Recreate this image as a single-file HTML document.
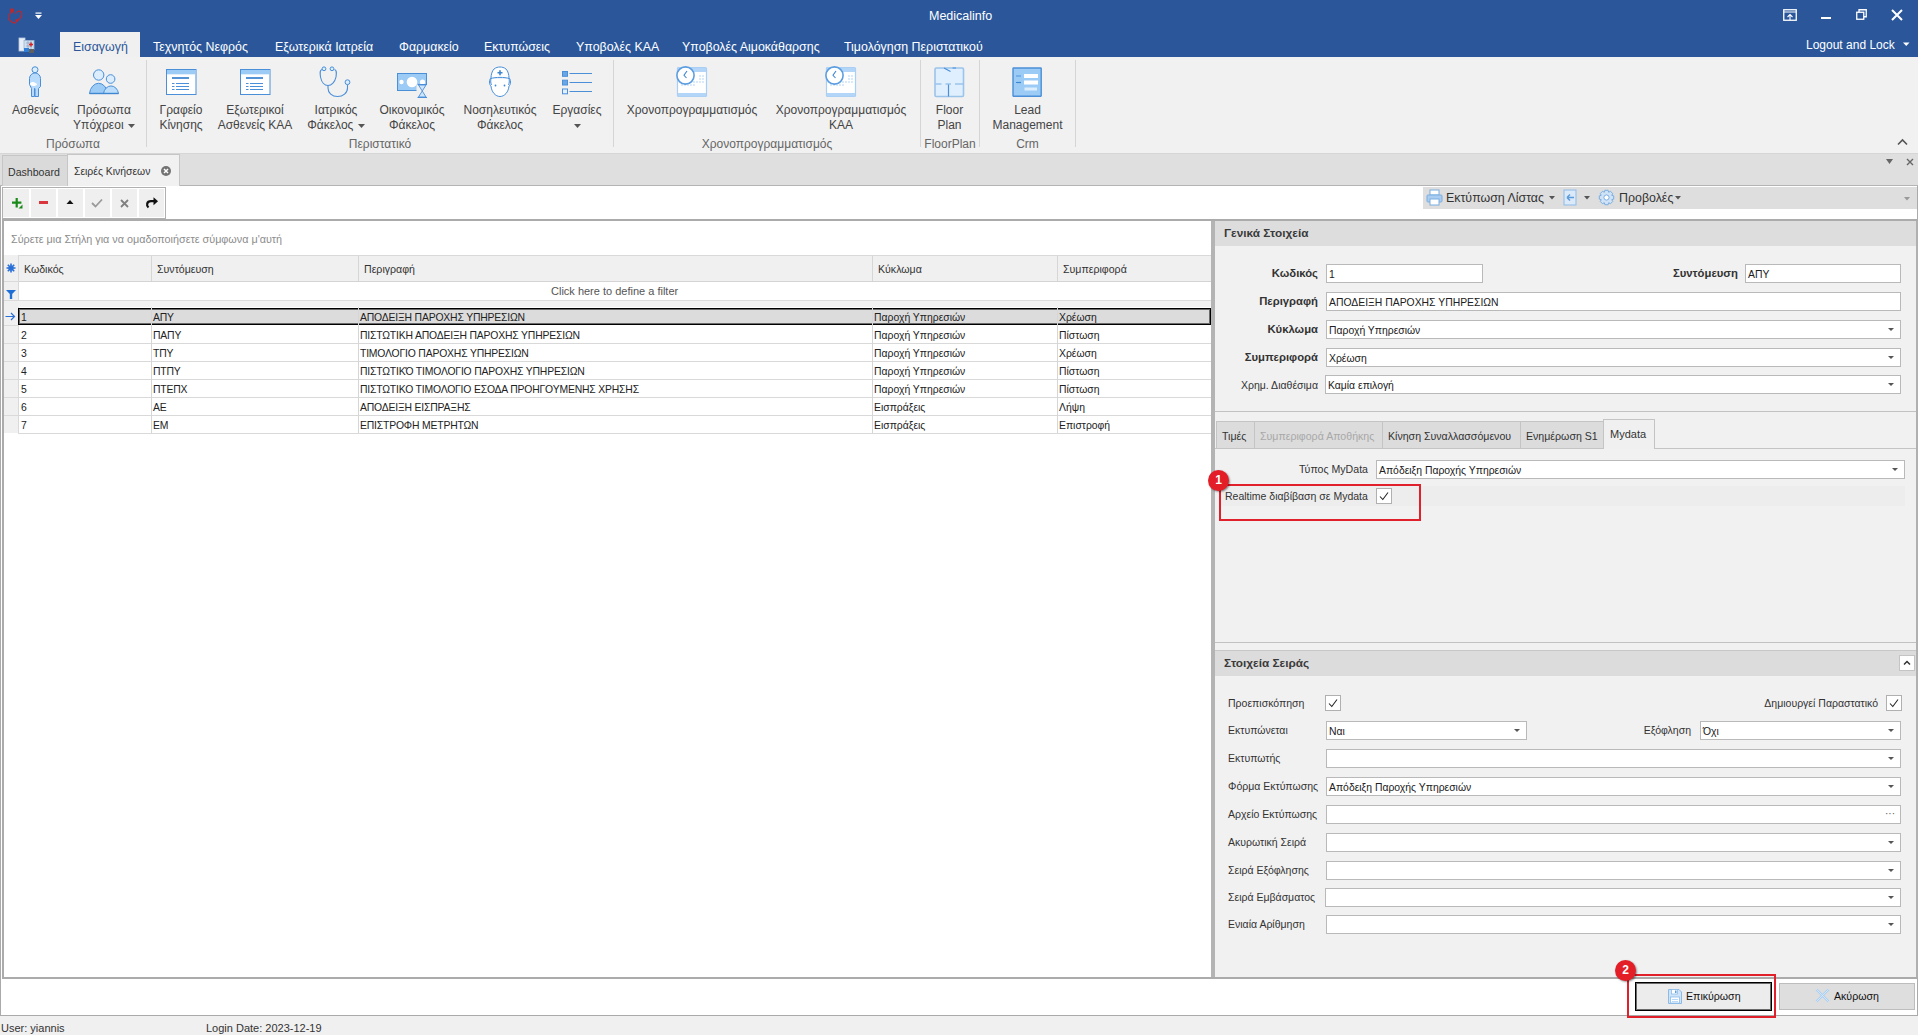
<!DOCTYPE html>
<html><head><meta charset="utf-8">
<style>
*{box-sizing:border-box;margin:0;padding:0}
html,body{width:1918px;height:1035px;overflow:hidden;background:#f0f0f0;font-family:"Liberation Sans",sans-serif;font-size:11px;color:#1e1e1e}
.a{position:absolute}
.t{position:absolute;white-space:nowrap;line-height:1}
.w{color:#fff}
.rb{font-size:12px;color:#444;text-align:center;line-height:15px;white-space:nowrap}
.gl{font-size:12px;color:#666;text-align:center;white-space:nowrap}
.sep{position:absolute;width:1px;background:#d5d5d5;top:60px;height:87px}
.inp{position:absolute;background:#fff;border:1px solid #b9b9b9;height:19px}
.inp span{position:absolute;left:2px;top:3px;white-space:nowrap;font-size:11px;color:#202020}
.dd{position:absolute;right:6px;top:7px;width:0;height:0;border-left:3.5px solid transparent;border-right:3.5px solid transparent;border-top:3.5px solid #555}
.lbl{position:absolute;white-space:nowrap;font-size:11px;color:#303030}
.blbl{position:absolute;white-space:nowrap;font-size:11px;font-weight:bold;color:#303030;text-align:right}
.chk{position:absolute;width:16px;height:16px;background:#fff;border:1px solid #b0b0b0}
.row{position:absolute;left:18px;width:1192px;height:18px;border-bottom:1px solid #dcdcdc}
.cell{position:absolute;top:4px;white-space:nowrap;font-size:11px;color:#202020}
</style></head>
<body>
<!-- title bar + menu -->
<div class="a" style="left:0;top:0;width:1918px;height:57px;background:#2b579a"></div>
<div class="t w" style="left:929px;top:10px;font-size:12.5px">Medicalinfo</div>

<!-- active ribbon tab -->
<div class="a" style="left:60px;top:32px;width:80px;height:26px;background:#f0f0f0"></div>
<div class="t" style="left:73px;top:41px;font-size:12.4px;color:#2b579a">Εισαγωγή</div>
<div class="t w" style="left:153px;top:41px;font-size:12.4px">Τεχνητός Νεφρός</div>
<div class="t w" style="left:275px;top:41px;font-size:12.4px">Εξωτερικά Ιατρεία</div>
<div class="t w" style="left:399px;top:41px;font-size:12.4px">Φαρμακείο</div>
<div class="t w" style="left:484px;top:41px;font-size:12.4px">Εκτυπώσεις</div>
<div class="t w" style="left:576px;top:41px;font-size:12.4px">Υποβολές ΚΑΑ</div>
<div class="t w" style="left:682px;top:41px;font-size:12.4px">Υποβολές Αιμοκάθαρσης</div>
<div class="t w" style="left:844px;top:41px;font-size:12.4px">Τιμολόγηση Περιστατικού</div>
<div class="t w" style="left:1806px;top:39px;font-size:12px">Logout and Lock</div>

<!-- ribbon -->
<div class="a" style="left:0;top:57px;width:1918px;height:97px;background:#f1f1f1;border-bottom:1px solid #d6d6d6"></div>

<!-- doc tab strip -->
<div class="a" style="left:0;top:154px;width:1918px;height:32px;background:#dfdfdf;border-bottom:1px solid #b4b4b4"></div>

<!-- content area -->
<div class="a" style="left:0;top:186px;width:1918px;height:830px;background:#fff;border-left:1px solid #aaa;border-bottom:1px solid #aaa;border-right:1px solid #aaa"></div>

<!-- status bar -->
<div class="t" style="left:1px;top:1023px;font-size:11px;color:#333">User: yiannis</div>
<div class="t" style="left:206px;top:1023px;font-size:11px;color:#333">Login Date: 2023-12-19</div>
<!-- doc tabs -->
<div class="a" style="left:2px;top:155px;width:66px;height:31px;background:#dadada;border:1px solid #c6c6c6;border-bottom:none"></div>
<div class="t" style="left:8px;top:167px;font-size:10.6px;color:#333">Dashboard</div>
<div class="a" style="left:67px;top:154px;width:113px;height:32px;background:#f1f1f1;border:1px solid #c6c6c6;border-bottom:none"></div>
<div class="t" style="left:74px;top:167px;font-size:10.4px;color:#333">Σειρές Κινήσεων</div>
<div class="a" style="left:161px;top:166px;width:10px;height:10px;border-radius:50%;background:#737373"></div>
<svg class="a" style="left:161px;top:166px" width="10" height="10"><path d="M3 3L7 7M7 3L3 7" stroke="#fff" stroke-width="1.5"/></svg>
<svg class="a" style="left:1886px;top:159px" width="8" height="6"><path d="M0 0H7L3.5 5Z" fill="#666"/></svg>
<svg class="a" style="left:1906px;top:158px" width="8" height="8"><path d="M1 1L7 7M7 1L1 7" stroke="#666" stroke-width="1.4"/></svg>

<!-- toolbar -->
<div class="a" style="left:2px;top:187px;width:164px;height:32px;background:#fff;border:1px solid #b0b0b0"></div>
<div class="a" style="left:3px;top:189px;width:26px;height:28px;background:#efefef"></div>
<div class="a" style="left:31px;top:189px;width:25px;height:28px;background:#efefef"></div>
<div class="a" style="left:58px;top:189px;width:25px;height:28px;background:#efefef"></div>
<div class="a" style="left:85px;top:189px;width:25px;height:28px;background:#efefef"></div>
<div class="a" style="left:112px;top:189px;width:25px;height:28px;background:#efefef"></div>
<div class="a" style="left:139px;top:189px;width:25px;height:28px;background:#efefef"></div>
<svg class="a" style="left:12px;top:198px" width="11" height="11"><path d="M3.6 0h2.2v3.6H9.4v2.2H5.8V9.4H3.6V5.8H0V3.6h3.6z" fill="#1a8a1a"/><path d="M10.5 6.5V10.5H6.5z" fill="#1a8a1a"/></svg>
<div class="a" style="left:39px;top:201px;width:9px;height:3px;background:#d9363e"></div>
<svg class="a" style="left:66px;top:199px" width="9" height="6"><path d="M0.5 5H7.5L4 1Z" fill="#111"/></svg>
<svg class="a" style="left:91px;top:198px" width="12" height="10"><path d="M1 5L4.5 8.5L11 1.5" stroke="#9a9a9a" stroke-width="1.8" fill="none"/></svg>
<svg class="a" style="left:120px;top:199px" width="9" height="9"><path d="M1 1L8 8M8 1L1 8" stroke="#808080" stroke-width="1.8"/></svg>
<svg class="a" style="left:145px;top:196px" width="14" height="13"><path d="M3.5 11.5C1.2 9.5 1.5 5.2 6 5.2H9" stroke="#111" stroke-width="2.2" fill="none"/><path d="M8.5 1.2L13 5.2L8.5 9.2Z" fill="#111"/></svg>

<!-- right toolbar -->
<div class="a" style="left:1423px;top:187px;width:494px;height:22px;background:#dedede"></div>
<svg class="a" style="left:1426px;top:189px" width="17" height="17"><rect x="4" y="1" width="9" height="5" fill="#fff" stroke="#7aaee0"/><rect x="1" y="6" width="15" height="7" rx="1" fill="#a9cdf0" stroke="#7aaee0"/><rect x="4" y="10" width="9" height="6" fill="#fff" stroke="#7aaee0"/></svg>
<div class="t" style="left:1446px;top:192px;font-size:12.4px;color:#333">Εκτύπωση Λίστας</div>
<svg class="a" style="left:1549px;top:196px" width="7" height="4"><path d="M0 0H6L3 3.5Z" fill="#555"/></svg>
<svg class="a" style="left:1563px;top:189px" width="15" height="17"><rect x="1" y="1" width="12" height="15" fill="#dbe9f8" stroke="#8dbbe8"/><path d="M4 8.5H11M4 8.5L7 5.5M4 8.5L7 11.5" stroke="#5d9ddc" stroke-width="1.5" fill="none"/></svg>
<svg class="a" style="left:1584px;top:196px" width="7" height="4"><path d="M0 0H6L3 3.5Z" fill="#555"/></svg>
<svg class="a" style="left:1598px;top:189px" width="17" height="17"><path d="M15.72 6.89 L15.72 10.11 L13.77 10.67 L13.76 10.70 L14.75 12.46 L12.46 14.75 L10.70 13.76 L10.67 13.77 L10.11 15.72 L6.89 15.72 L6.33 13.77 L6.30 13.76 L4.54 14.75 L2.25 12.46 L3.24 10.70 L3.23 10.67 L1.28 10.11 L1.28 6.89 L3.23 6.33 L3.24 6.30 L2.25 4.54 L4.54 2.25 L6.30 3.24 L6.33 3.23 L6.89 1.28 L10.11 1.28 L10.67 3.23 L10.70 3.24 L12.46 2.25 L14.75 4.54 L13.76 6.30 L13.77 6.33Z" fill="#cfe2f6" stroke="#7aaee0" stroke-width="1"/><circle cx="8.5" cy="8.5" r="2.6" fill="#fff" stroke="#7aaee0"/></svg>
<div class="t" style="left:1619px;top:192px;font-size:12.4px;color:#333">Προβολές</div>
<svg class="a" style="left:1675px;top:196px" width="7" height="4"><path d="M0 0H6L3 3.5Z" fill="#555"/></svg>
<svg class="a" style="left:1904px;top:197px" width="7" height="4"><path d="M0 0H6L3 3.5Z" fill="#999"/></svg>
<!-- grid -->
<div class="a" style="left:2px;top:219px;width:1210px;height:760px;border:2px solid #ababab;border-right:none;background:#fff"></div>
<div class="t" style="left:11px;top:234px;font-size:10.8px;color:#8c8c8c">Σύρετε μια Στήλη για να ομαδοποιήσετε σύμφωνα μ'αυτή</div>
<div class="a" style="left:4px;top:255px;width:1207px;height:27px;background:#f0f0f0;border-top:1px solid #d9d9d9;border-bottom:1px solid #d4d4d4"></div>
<div class="a" style="left:4px;top:255px;width:15px;height:178px;background:#f0f0f0;border-right:1px solid #d9d9d9"></div>
<div class="a" style="left:4px;top:281px;width:14px;height:1px;background:#dadada"></div>
<div class="a" style="left:4px;top:300px;width:14px;height:1px;background:#dadada"></div>
<div class="a" style="left:4px;top:325px;width:14px;height:1px;background:#dadada"></div>
<div class="a" style="left:4px;top:343px;width:14px;height:1px;background:#dadada"></div>
<div class="a" style="left:4px;top:361px;width:14px;height:1px;background:#dadada"></div>
<div class="a" style="left:4px;top:379px;width:14px;height:1px;background:#dadada"></div>
<div class="a" style="left:4px;top:397px;width:14px;height:1px;background:#dadada"></div>
<div class="a" style="left:4px;top:415px;width:14px;height:1px;background:#dadada"></div>
<div class="a" style="left:151px;top:256px;width:1px;height:25px;background:#d6d6d6"></div>
<div class="a" style="left:358px;top:256px;width:1px;height:25px;background:#d6d6d6"></div>
<div class="a" style="left:872px;top:256px;width:1px;height:25px;background:#d6d6d6"></div>
<div class="a" style="left:1057px;top:256px;width:1px;height:25px;background:#d6d6d6"></div>
<div class="t" style="left:24px;top:264px;font-size:10.6px;color:#333">Κωδικός</div>
<div class="t" style="left:157px;top:264px;font-size:10.6px;color:#333">Συντόμευση</div>
<div class="t" style="left:364px;top:264px;font-size:10.6px;color:#333">Περιγραφή</div>
<div class="t" style="left:878px;top:264px;font-size:10.6px;color:#333">Κύκλωμα</div>
<div class="t" style="left:1063px;top:264px;font-size:10.6px;color:#333">Συμπεριφορά</div>
<svg class="a" style="left:6px;top:263px" width="10" height="10"><path d="M5 0.5V9.5M0.5 5H9.5M1.8 1.8L8.2 8.2M8.2 1.8L1.8 8.2" stroke="#2a6fd6" stroke-width="1.6"/><circle cx="5" cy="5" r="2.6" fill="#2a6fd6"/></svg>
<svg class="a" style="left:6px;top:290px" width="10" height="9"><path d="M0 0H10L6.2 4V9H3.8V4Z" fill="#1f6fd6"/></svg>
<svg class="a" style="left:5px;top:312px" width="11" height="9"><path d="M0.5 4.5H9.5M6 1L9.5 4.5L6 8" stroke="#2a6fd6" stroke-width="1.2" fill="none"/></svg>
<div class="t" style="left:551px;top:286px;font-size:11px;color:#555">Click here to define a filter</div>
<div class="a" style="left:18px;top:300px;width:1193px;height:7px;background:#f2f2f2;border-top:1px solid #dcdcdc"></div>
<div class="a" style="left:18px;top:308px;width:1193px;height:17px;background:#dcdcdc;border:1px solid #000;box-shadow:inset 0 0 0 1px #6a6a6a"></div>
<div class="a" style="left:151px;top:307px;width:1px;height:18px;background:#d6d6d6"></div>
<div class="a" style="left:358px;top:307px;width:1px;height:18px;background:#d6d6d6"></div>
<div class="a" style="left:872px;top:307px;width:1px;height:18px;background:#d6d6d6"></div>
<div class="a" style="left:1057px;top:307px;width:1px;height:18px;background:#d6d6d6"></div>
<div class="t" style="left:21px;top:313px;font-size:10.4px;color:#222">1</div>
<div class="t" style="left:153px;top:313px;font-size:10.4px;letter-spacing:-0.18px;color:#222">ΑΠΥ</div>
<div class="t" style="left:360px;top:313px;font-size:10.4px;letter-spacing:-0.18px;color:#222">ΑΠΟΔΕΙΞΗ ΠΑΡΟΧΗΣ ΥΠΗΡΕΣΙΩΝ</div>
<div class="t" style="left:874px;top:313px;font-size:10.4px;color:#222">Παροχή Υπηρεσιών</div>
<div class="t" style="left:1059px;top:313px;font-size:10.4px;color:#222">Χρέωση</div>
<div class="a" style="left:18px;top:343px;width:1193px;height:1px;background:#d9d9d9"></div>
<div class="a" style="left:151px;top:325px;width:1px;height:18px;background:#d6d6d6"></div>
<div class="a" style="left:358px;top:325px;width:1px;height:18px;background:#d6d6d6"></div>
<div class="a" style="left:872px;top:325px;width:1px;height:18px;background:#d6d6d6"></div>
<div class="a" style="left:1057px;top:325px;width:1px;height:18px;background:#d6d6d6"></div>
<div class="t" style="left:21px;top:331px;font-size:10.4px;color:#222">2</div>
<div class="t" style="left:153px;top:331px;font-size:10.4px;letter-spacing:-0.18px;color:#222">ΠΑΠΥ</div>
<div class="t" style="left:360px;top:331px;font-size:10.4px;letter-spacing:-0.18px;color:#222">ΠΙΣΤΩΤΙΚΗ ΑΠΟΔΕΙΞΗ ΠΑΡΟΧΗΣ ΥΠΗΡΕΣΙΩΝ</div>
<div class="t" style="left:874px;top:331px;font-size:10.4px;color:#222">Παροχή Υπηρεσιών</div>
<div class="t" style="left:1059px;top:331px;font-size:10.4px;color:#222">Πίστωση</div>
<div class="a" style="left:18px;top:361px;width:1193px;height:1px;background:#d9d9d9"></div>
<div class="a" style="left:151px;top:343px;width:1px;height:18px;background:#d6d6d6"></div>
<div class="a" style="left:358px;top:343px;width:1px;height:18px;background:#d6d6d6"></div>
<div class="a" style="left:872px;top:343px;width:1px;height:18px;background:#d6d6d6"></div>
<div class="a" style="left:1057px;top:343px;width:1px;height:18px;background:#d6d6d6"></div>
<div class="t" style="left:21px;top:349px;font-size:10.4px;color:#222">3</div>
<div class="t" style="left:153px;top:349px;font-size:10.4px;letter-spacing:-0.18px;color:#222">ΤΠΥ</div>
<div class="t" style="left:360px;top:349px;font-size:10.4px;letter-spacing:-0.18px;color:#222">ΤΙΜΟΛΟΓΙΟ ΠΑΡΟΧΗΣ ΥΠΗΡΕΣΙΩΝ</div>
<div class="t" style="left:874px;top:349px;font-size:10.4px;color:#222">Παροχή Υπηρεσιών</div>
<div class="t" style="left:1059px;top:349px;font-size:10.4px;color:#222">Χρέωση</div>
<div class="a" style="left:18px;top:379px;width:1193px;height:1px;background:#d9d9d9"></div>
<div class="a" style="left:151px;top:361px;width:1px;height:18px;background:#d6d6d6"></div>
<div class="a" style="left:358px;top:361px;width:1px;height:18px;background:#d6d6d6"></div>
<div class="a" style="left:872px;top:361px;width:1px;height:18px;background:#d6d6d6"></div>
<div class="a" style="left:1057px;top:361px;width:1px;height:18px;background:#d6d6d6"></div>
<div class="t" style="left:21px;top:367px;font-size:10.4px;color:#222">4</div>
<div class="t" style="left:153px;top:367px;font-size:10.4px;letter-spacing:-0.18px;color:#222">ΠΤΠΥ</div>
<div class="t" style="left:360px;top:367px;font-size:10.4px;letter-spacing:-0.18px;color:#222">ΠΙΣΤΩΤΙΚΌ ΤΙΜΟΛΟΓΙΟ ΠΑΡΟΧΗΣ ΥΠΗΡΕΣΙΩΝ</div>
<div class="t" style="left:874px;top:367px;font-size:10.4px;color:#222">Παροχή Υπηρεσιών</div>
<div class="t" style="left:1059px;top:367px;font-size:10.4px;color:#222">Πίστωση</div>
<div class="a" style="left:18px;top:397px;width:1193px;height:1px;background:#d9d9d9"></div>
<div class="a" style="left:151px;top:379px;width:1px;height:18px;background:#d6d6d6"></div>
<div class="a" style="left:358px;top:379px;width:1px;height:18px;background:#d6d6d6"></div>
<div class="a" style="left:872px;top:379px;width:1px;height:18px;background:#d6d6d6"></div>
<div class="a" style="left:1057px;top:379px;width:1px;height:18px;background:#d6d6d6"></div>
<div class="t" style="left:21px;top:385px;font-size:10.4px;color:#222">5</div>
<div class="t" style="left:153px;top:385px;font-size:10.4px;letter-spacing:-0.18px;color:#222">ΠΤΕΠΧ</div>
<div class="t" style="left:360px;top:385px;font-size:10.4px;letter-spacing:-0.18px;color:#222">ΠΙΣΤΩΤΙΚΟ ΤΙΜΟΛΟΓΙΟ ΕΣΟΔΑ ΠΡΟΗΓΟΥΜΕΝΗΣ ΧΡΗΣΗΣ</div>
<div class="t" style="left:874px;top:385px;font-size:10.4px;color:#222">Παροχή Υπηρεσιών</div>
<div class="t" style="left:1059px;top:385px;font-size:10.4px;color:#222">Πίστωση</div>
<div class="a" style="left:18px;top:415px;width:1193px;height:1px;background:#d9d9d9"></div>
<div class="a" style="left:151px;top:397px;width:1px;height:18px;background:#d6d6d6"></div>
<div class="a" style="left:358px;top:397px;width:1px;height:18px;background:#d6d6d6"></div>
<div class="a" style="left:872px;top:397px;width:1px;height:18px;background:#d6d6d6"></div>
<div class="a" style="left:1057px;top:397px;width:1px;height:18px;background:#d6d6d6"></div>
<div class="t" style="left:21px;top:403px;font-size:10.4px;color:#222">6</div>
<div class="t" style="left:153px;top:403px;font-size:10.4px;letter-spacing:-0.18px;color:#222">ΑΕ</div>
<div class="t" style="left:360px;top:403px;font-size:10.4px;letter-spacing:-0.18px;color:#222">ΑΠΟΔΕΙΞΗ ΕΙΣΠΡΑΞΗΣ</div>
<div class="t" style="left:874px;top:403px;font-size:10.4px;color:#222">Εισπράξεις</div>
<div class="t" style="left:1059px;top:403px;font-size:10.4px;color:#222">Λήψη</div>
<div class="a" style="left:18px;top:433px;width:1193px;height:1px;background:#d9d9d9"></div>
<div class="a" style="left:151px;top:415px;width:1px;height:18px;background:#d6d6d6"></div>
<div class="a" style="left:358px;top:415px;width:1px;height:18px;background:#d6d6d6"></div>
<div class="a" style="left:872px;top:415px;width:1px;height:18px;background:#d6d6d6"></div>
<div class="a" style="left:1057px;top:415px;width:1px;height:18px;background:#d6d6d6"></div>
<div class="t" style="left:21px;top:421px;font-size:10.4px;color:#222">7</div>
<div class="t" style="left:153px;top:421px;font-size:10.4px;letter-spacing:-0.18px;color:#222">ΕΜ</div>
<div class="t" style="left:360px;top:421px;font-size:10.4px;letter-spacing:-0.18px;color:#222">ΕΠΙΣΤΡΟΦΗ ΜΕΤΡΗΤΩΝ</div>
<div class="t" style="left:874px;top:421px;font-size:10.4px;color:#222">Εισπράξεις</div>
<div class="t" style="left:1059px;top:421px;font-size:10.4px;color:#222">Επιστροφή</div>
<!-- right panel -->
<div class="a" style="left:1211px;top:219px;width:5px;height:760px;background:#b4b4b4"></div>
<div class="a" style="left:1211px;top:219px;width:707px;height:2px;background:#ababab"></div>
<div class="a" style="left:1215px;top:221px;width:703px;height:758px;background:#f1f1f1;border-right:2px solid #b0b0b0"></div>
<div class="a" style="left:1215px;top:221px;width:701px;height:25px;background:#dddddd"></div>
<div class="t" style="left:1224px;top:228px;font-size:11.8px;font-weight:bold;color:#3a3a3a">Γενικά Στοιχεία</div>
<div class="a" style="left:1215px;top:411px;width:701px;height:1px;background:#c2c2c2"></div>
<div class="t" style="right:600px;top:268px;font-size:11.3px;font-weight:bold;color:#333">Κωδικός</div>
<div class="inp" style="left:1326px;top:264px;width:157px;height:19px"><span style="font-size:10.4px;top:4px">1</span></div>
<div class="t" style="right:180px;top:268px;font-size:11.3px;font-weight:bold;color:#333">Συντόμευση</div>
<div class="inp" style="left:1745px;top:264px;width:156px;height:19px"><span style="font-size:10.4px;top:4px">ΑΠΥ</span></div>
<div class="t" style="right:600px;top:296px;font-size:11.3px;font-weight:bold;color:#333">Περιγραφή</div>
<div class="inp" style="left:1326px;top:292px;width:575px;height:19px"><span style="font-size:10.4px;top:4px">ΑΠΟΔΕΙΞΗ ΠΑΡΟΧΗΣ ΥΠΗΡΕΣΙΩΝ</span></div>
<div class="t" style="right:600px;top:324px;font-size:11.3px;font-weight:bold;color:#333">Κύκλωμα</div>
<div class="inp" style="left:1326px;top:320px;width:575px;height:19px"><span style="font-size:10.4px;top:4px">Παροχή Υπηρεσιών</span><i class="dd"></i></div>
<div class="t" style="right:600px;top:352px;font-size:11.3px;font-weight:bold;color:#333">Συμπεριφορά</div>
<div class="inp" style="left:1326px;top:348px;width:575px;height:19px"><span style="font-size:10.4px;top:4px">Χρέωση</span><i class="dd"></i></div>
<div class="t" style="right:600px;top:380px;font-size:10.5px;color:#333">Χρημ. Διαθέσιμα</div>
<div class="inp" style="left:1325px;top:375px;width:576px;height:19px"><span style="font-size:10.4px;top:4px">Καμία επιλογή</span><i class="dd"></i></div>
<div class="a" style="left:1216px;top:421px;width:39px;height:28px;background:#dcdcdc;border:1px solid #c4c4c4"></div>
<div class="t" style="left:1222px;top:431px;font-size:10.6px;color:#333">Τιμές</div>
<div class="a" style="left:1254px;top:421px;width:129px;height:28px;background:#dcdcdc;border:1px solid #c4c4c4"></div>
<div class="t" style="left:1260px;top:431px;font-size:10.6px;color:#a8a8a8">Συμπεριφορά Αποθήκης</div>
<div class="a" style="left:1382px;top:421px;width:139px;height:28px;background:#dcdcdc;border:1px solid #c4c4c4"></div>
<div class="t" style="left:1388px;top:431px;font-size:10.6px;color:#333">Κίνηση Συναλλασσόμενου</div>
<div class="a" style="left:1520px;top:421px;width:84px;height:28px;background:#dcdcdc;border:1px solid #c4c4c4"></div>
<div class="t" style="left:1526px;top:431px;font-size:10.6px;color:#333">Ενημέρωση S1</div>
<div class="a" style="left:1215px;top:448px;width:701px;height:1px;background:#c4c4c4"></div>
<div class="a" style="left:1603px;top:419px;width:52px;height:30px;background:#f0f0f0;border:1px solid #c4c4c4;border-bottom:none"></div>
<div class="t" style="left:1610px;top:429px;font-size:11px;color:#333">Mydata</div>
<div class="t" style="right:550px;top:464px;font-size:10.6px;color:#333">Τύπος MyData</div>
<div class="inp" style="left:1376px;top:460px;width:529px;height:19px"><span style="font-size:10.4px;top:4px">Απόδειξη Παροχής Υπηρεσιών</span><i class="dd"></i></div>
<div class="a" style="left:1219px;top:486px;width:686px;height:20px;background:#ededed"></div>
<div class="t" style="left:1225px;top:491px;font-size:10.5px;color:#333">Realtime διαβίβαση σε Mydata</div>
<div class="chk" style="left:1376px;top:488px"></div><svg class="a" style="left:1379px;top:491px" width="10" height="10"><path d="M1 5.5L3.8 8.5L9 1.5" stroke="#222" stroke-width="1.05" fill="none"/></svg>
<div class="a" style="left:1215px;top:642px;width:701px;height:1px;background:#c2c2c2"></div>
<div class="a" style="left:1215px;top:650px;width:701px;height:26px;background:#dcdcdc;border-top:1px solid #c8c8c8"></div>
<div class="t" style="left:1224px;top:658px;font-size:11.8px;font-weight:bold;color:#3a3a3a">Στοιχεία Σειράς</div>
<div class="a" style="left:1899px;top:655px;width:16px;height:16px;background:#fff;border:1px solid #c4c4c4"></div>
<svg class="a" style="left:1903px;top:660px" width="8" height="6"><path d="M1 4.5L4 1.5L7 4.5" stroke="#333" stroke-width="1.5" fill="none"/></svg>
<div class="t" style="left:1228px;top:698px;font-size:10.5px;color:#333">Προεπισκόπηση</div>
<div class="chk" style="left:1325px;top:695px"></div><svg class="a" style="left:1328px;top:698px" width="10" height="10"><path d="M1 5.5L3.8 8.5L9 1.5" stroke="#222" stroke-width="1.05" fill="none"/></svg>
<div class="t" style="right:40px;top:698px;font-size:10.5px;color:#333">Δημιουργεί Παραστατικό</div>
<div class="chk" style="left:1886px;top:695px"></div><svg class="a" style="left:1889px;top:698px" width="10" height="10"><path d="M1 5.5L3.8 8.5L9 1.5" stroke="#222" stroke-width="1.05" fill="none"/></svg>
<div class="t" style="left:1228px;top:725px;font-size:10.5px;color:#333">Εκτυπώνεται</div>
<div class="inp" style="left:1326px;top:721px;width:201px;height:19px"><span style="font-size:10.4px;top:4px">Ναι</span><i class="dd"></i></div>
<div class="t" style="right:227px;top:725px;font-size:10.5px;color:#333">Εξόφληση</div>
<div class="inp" style="left:1700px;top:721px;width:201px;height:19px"><span style="font-size:10.4px;top:4px">Όχι</span><i class="dd"></i></div>
<div class="t" style="left:1228px;top:753px;font-size:10.5px;color:#333">Εκτυπωτής</div>
<div class="inp" style="left:1326px;top:749px;width:575px;height:19px"><i class="dd"></i></div>
<div class="t" style="left:1228px;top:781px;font-size:10.5px;color:#333">Φόρμα Εκτύπωσης</div>
<div class="inp" style="left:1326px;top:777px;width:575px;height:19px"><span style="font-size:10.4px;top:4px">Απόδειξη Παροχής Υπηρεσιών</span><i class="dd"></i></div>
<div class="t" style="left:1228px;top:809px;font-size:10.5px;color:#333">Αρχείο Εκτύπωσης</div>
<div class="inp" style="left:1326px;top:805px;width:575px;height:19px"><span style="left:auto;right:5px;top:2px;font-size:10px;color:#555">···</span></div>
<div class="t" style="left:1228px;top:837px;font-size:10.5px;color:#333">Ακυρωτική Σειρά</div>
<div class="inp" style="left:1326px;top:833px;width:575px;height:19px"><i class="dd"></i></div>
<div class="t" style="left:1228px;top:865px;font-size:10.5px;color:#333">Σειρά Εξόφλησης</div>
<div class="inp" style="left:1326px;top:861px;width:575px;height:19px"><i class="dd"></i></div>
<div class="t" style="left:1228px;top:892px;font-size:10.5px;color:#333">Σειρά Εμβάσματος</div>
<div class="inp" style="left:1325px;top:888px;width:576px;height:19px"><i class="dd"></i></div>
<div class="t" style="left:1228px;top:919px;font-size:10.5px;color:#333">Ενιαία Αρίθμηση</div>
<div class="inp" style="left:1326px;top:915px;width:575px;height:19px"><i class="dd"></i></div>
<div class="a" style="left:1211px;top:977px;width:707px;height:2px;background:#ababab"></div>
<!-- title bar icons -->
<svg class="a" style="left:7px;top:7px" width="17" height="17"><path d="M5 5.5C2.5 6 1 8.5 1.6 11C2.3 13.5 5.5 15.5 7.5 16.3M7.5 16.3C9.5 14.5 13.5 12 14.6 8.5C15.3 6 13.8 3.8 11.5 4.2C10 4.5 9 5.5 8.3 6.8" stroke="#c0272d" stroke-width="1.1" fill="none"/><ellipse cx="5" cy="3.6" rx="2" ry="2.4" fill="#c0272d"/><circle cx="9.8" cy="13.2" r="1.3" fill="#c0272d"/></svg>
<svg class="a" style="left:35px;top:12px" width="7" height="8"><rect x="0.5" y="0.5" width="6" height="1.2" fill="#fff"/><path d="M0 3H7L3.5 7Z" fill="#fff"/></svg>
<svg class="a" style="left:18px;top:37px" width="18" height="17"><rect x="1" y="1" width="6" height="13" fill="#e6eef7" stroke="#b9c9dc" stroke-width="0.8"/><rect x="6" y="3.5" width="10" height="9" fill="#cfdff0" stroke="#9fb6d2" stroke-width="0.8"/><path d="M8 6H14M8 9H14M10 4V12M13 4V12" stroke="#7d98bb" stroke-width="0.6"/><path d="M13 5.5V9.5M11 7.5H15" stroke="#e02020" stroke-width="1.3"/><rect x="6" y="11" width="5" height="4" fill="#2f7fd8"/><rect x="11" y="12" width="5" height="4" fill="#606060"/></svg>
<svg class="a" style="left:1783px;top:9px" width="14" height="12"><rect x="0.75" y="0.75" width="12.5" height="10.5" fill="none" stroke="#fff" stroke-width="1.3"/><path d="M1 3H13" stroke="#fff" stroke-width="1"/><path d="M7 11V5.5M4.5 8L7 5.5L9.5 8" stroke="#fff" stroke-width="1.1" fill="none"/></svg>
<div class="a" style="left:1821px;top:17px;width:10px;height:2px;background:#fff"></div>
<svg class="a" style="left:1856px;top:9px" width="11" height="11"><rect x="0.75" y="3.25" width="7" height="7" fill="none" stroke="#fff" stroke-width="1.3"/><path d="M3 3.25V0.75H10.25V7.75H7.75" fill="none" stroke="#fff" stroke-width="1.3"/></svg>
<svg class="a" style="left:1891px;top:9px" width="12" height="12"><path d="M1 1L11 11M11 1L1 11" stroke="#fff" stroke-width="2"/></svg>
<svg class="a" style="left:1903px;top:42px" width="7" height="5"><path d="M0 0.5H6.5L3.25 4Z" fill="#fff"/></svg>

<!-- ribbon separators -->
<div class="sep" style="left:146px"></div>
<div class="sep" style="left:613px"></div>
<div class="sep" style="left:920px"></div>
<div class="sep" style="left:979px"></div>
<div class="sep" style="left:1075px"></div>
<svg class="a" style="left:1897px;top:138px" width="11" height="8"><path d="M1 6.5L5.5 2L10 6.5" stroke="#555" stroke-width="1.6" fill="none"/></svg>

<!-- ribbon icons -->
<svg class="a" style="left:27px;top:65px" width="17" height="34"><circle cx="8" cy="4.75" r="3" fill="#dcedfd" stroke="#4a8fd8"/><path d="M2.5 19.5V13.5A5.5 5.5 0 0 1 13.5 13.5V21.5L11.5 23.5V31.5H8V23.5H7.5V31.5H4.5V23.5Z" fill="#b8dbfb" stroke="#4a8fd8" stroke-linejoin="round"/><path d="M3 18.5C4 16.5 7 16.5 8.5 18L10 19C10 20.5 8 21 6 21C4 21 3 20 3 18.5Z" fill="#fff"/></svg>
<svg class="a" style="left:88px;top:68px" width="32" height="28"><circle cx="10.7" cy="7" r="5.2" fill="#dcedfd" stroke="#4a8fd8"/><circle cx="22.6" cy="11" r="4.3" fill="#dcedfd" stroke="#4a8fd8"/><path d="M1.5 25.5A9.2 12 0 0 1 19.7 25.5Z" fill="#9ccbf6" stroke="#4a8fd8"/><path d="M15.5 25.5A7.6 9 0 0 1 30.5 25.5Z" fill="#bcdefc" stroke="#4a8fd8"/><path d="M1.5 25.5H30.5" stroke="#3f86d1" stroke-width="1.4"/></svg>
<svg class="a" style="left:166px;top:69px" width="31" height="27"><rect x="0.5" y="0.5" width="29.5" height="25" fill="#fff" stroke="#4a8fd8"/><rect x="1" y="1" width="28.5" height="4.3" fill="#9ccbf6"/><path d="M6 9H23" stroke="#3f86d1" stroke-width="1.8"/><path d="M6 14.5H8.5M10 14.5H23M6 17.5H8.5M10 17.5H23M6 20.5H8.5M10 20.5H23" stroke="#4a8fd8" stroke-width="1"/></svg>
<svg class="a" style="left:240px;top:69px" width="31" height="27"><rect x="0.5" y="0.5" width="29.5" height="25" fill="#fff" stroke="#4a8fd8"/><rect x="1" y="1" width="28.5" height="4.3" fill="#9ccbf6"/><path d="M6 9H23" stroke="#3f86d1" stroke-width="1.8"/><path d="M6 14.5H8.5M10 14.5H23M6 17.5H8.5M10 17.5H23M6 20.5H8.5M10 20.5H23" stroke="#4a8fd8" stroke-width="1"/></svg>
<svg class="a" style="left:318px;top:65px" width="33" height="33"><path d="M4 4.5C1.5 5 2 8 2.5 12C3.5 17 6.5 20.5 10 20.5C13.5 20.5 17 17 18 12C18.5 8 19 5 16.5 4.5" stroke="#4a8fd8" stroke-width="1.1" fill="none"/><circle cx="6" cy="3.8" r="1.9" fill="#dcedfd" stroke="#4a8fd8"/><circle cx="14" cy="3.8" r="1.9" fill="#dcedfd" stroke="#4a8fd8"/><path d="M10 20.5V23C10 28 14 31.5 19.5 31.5C25 31.5 29.5 28 29.5 23V19.5" stroke="#4a8fd8" stroke-width="1.1" fill="none"/><circle cx="29.5" cy="17.2" r="2.4" fill="#dcedfd" stroke="#4a8fd8"/></svg>
<svg class="a" style="left:396px;top:72px" width="33" height="27"><rect x="1.5" y="1.5" width="29" height="17" fill="#9ccbf6" stroke="#4a8fd8"/><circle cx="16" cy="10" r="5.3" fill="#fff"/><circle cx="5.5" cy="10" r="2.2" fill="#fff"/><circle cx="26.5" cy="10" r="2.6" fill="#fff"/><rect x="20.5" y="12" width="11" height="14" fill="#f0f0f0"/><path d="M21.5 12.5H31M21.5 25.5H31" stroke="#4a8fd8" stroke-width="1.2"/><path d="M22.5 13L26.25 19L22.5 25H30L26.25 19L30 13Z" fill="#cfe6fc" stroke="#4a8fd8" stroke-width="0.9"/></svg>
<svg class="a" style="left:488px;top:66px" width="25" height="32"><path d="M3 12C1 13 1 19 3 20C3.5 26 7.5 30.5 12 30.5C16.5 30.5 20.5 26 21 20C23 19 23 13 21 12C21 9 20 5 18 3C16 1.5 14 1 12 1C10 1 8 1.5 6 3C4 5 3 9 3 12Z" fill="#fff" stroke="#4a8fd8" stroke-width="1"/><path d="M3 12.5C7 11 17 11 21 12.5M3 12C2.5 15 2.5 17 3.5 19M21 12C21.5 15 21.5 17 20.5 19" stroke="#4a8fd8" stroke-width="1" fill="#cfe6fc"/><path d="M12 4.2V9.2M9.5 6.7H14.5" stroke="#3f86d1" stroke-width="1.6"/><circle cx="7.5" cy="19.5" r="0.9" fill="#3f86d1"/><circle cx="16.5" cy="19.5" r="0.9" fill="#3f86d1"/></svg>
<svg class="a" style="left:561px;top:70px" width="33" height="25"><rect x="1.5" y="1.5" width="5" height="4.8" fill="#6aa6e4" stroke="#4a8fd8"/><rect x="1.5" y="10.2" width="5" height="4.8" fill="#6aa6e4" stroke="#4a8fd8"/><rect x="1.5" y="19" width="5" height="4.8" fill="#e4f1fd" stroke="#4a8fd8"/><path d="M8.5 3.5H31M8.5 12.5H31M8.5 21.5H31" stroke="#4a8fd8" stroke-width="1.1"/></svg>
<svg class="a" style="left:674px;top:65px" width="34" height="33"><rect x="3.5" y="2.5" width="29" height="29" rx="1" fill="#fff" stroke="#a9cff4" stroke-width="1.2"/><rect x="4" y="3" width="28" height="4" fill="#b3d6f8"/><rect x="4" y="28" width="28" height="3.3" fill="#b3d6f8"/><g fill="#a9cff4"><circle cx="26" cy="11" r="0.8"/><circle cx="29" cy="11" r="0.8"/><circle cx="26" cy="14" r="0.8"/><circle cx="29" cy="14" r="0.8"/><circle cx="20" cy="17" r="0.8"/><circle cx="23" cy="17" r="0.8"/><circle cx="26" cy="17" r="0.8"/><circle cx="29" cy="17" r="0.8"/><circle cx="8" cy="20" r="0.8"/><circle cx="11" cy="20" r="0.8"/><circle cx="14" cy="20" r="0.8"/><circle cx="17" cy="20" r="0.8"/><circle cx="20" cy="20" r="0.8"/></g><circle cx="11.5" cy="10.5" r="8.6" fill="#fff" stroke="#5b9de0" stroke-width="1.6"/><path d="M13 6L10 10.3L12.5 13" stroke="#3f86d1" stroke-width="1.1" fill="none"/></svg>
<svg class="a" style="left:823px;top:65px" width="34" height="33"><rect x="3.5" y="2.5" width="29" height="29" rx="1" fill="#fff" stroke="#a9cff4" stroke-width="1.2"/><rect x="4" y="3" width="28" height="4" fill="#b3d6f8"/><rect x="4" y="28" width="28" height="3.3" fill="#b3d6f8"/><g fill="#a9cff4"><circle cx="26" cy="11" r="0.8"/><circle cx="29" cy="11" r="0.8"/><circle cx="26" cy="14" r="0.8"/><circle cx="29" cy="14" r="0.8"/><circle cx="20" cy="17" r="0.8"/><circle cx="23" cy="17" r="0.8"/><circle cx="26" cy="17" r="0.8"/><circle cx="29" cy="17" r="0.8"/><circle cx="8" cy="20" r="0.8"/><circle cx="11" cy="20" r="0.8"/><circle cx="14" cy="20" r="0.8"/><circle cx="17" cy="20" r="0.8"/><circle cx="20" cy="20" r="0.8"/></g><circle cx="11.5" cy="10.5" r="8.6" fill="#fff" stroke="#5b9de0" stroke-width="1.6"/><path d="M13 6L10 10.3L12.5 13" stroke="#3f86d1" stroke-width="1.1" fill="none"/></svg>
<svg class="a" style="left:934px;top:67px" width="31" height="31"><rect x="1" y="1" width="28.5" height="28.5" rx="1.2" fill="#dfeffd" stroke="#9cc3ea" stroke-width="1.6"/><path d="M10 1L16.5 4.5M18.5 1H22" stroke="#4a8fd8" stroke-width="1.2"/><path d="M1 17H7.5M11.5 17H17M21 17H29.5" stroke="#9cc3ea" stroke-width="1.4"/><path d="M14.5 17.5V29.5" stroke="#4a8fd8" stroke-width="1.2"/></svg>
<svg class="a" style="left:1012px;top:67px" width="31" height="31"><rect x="1" y="1" width="28.2" height="28.2" rx="0.4" fill="#9ccbf6" stroke="#4a8fd8" stroke-width="1.4"/><rect x="12" y="7" width="14" height="4" fill="#fff"/><rect x="12" y="13.5" width="14" height="4" fill="#fff"/><rect x="12.5" y="20.5" width="12.5" height="3" fill="#dcedfd"/><path d="M4 9H9" stroke="#6aa6e4" stroke-width="1.5"/><path d="M4 15.5H9" stroke="#3f86d1" stroke-width="1.2"/></svg>

<!-- ribbon labels -->
<div class="a rb" style="left:0px;top:103px;width:71px">Ασθενείς</div>
<div class="a rb" style="left:67px;top:103px;width:74px">Πρόσωπα<br>Υπόχρεοι <svg width="7" height="4" style="vertical-align:middle;margin-left:1px"><path d="M0 0H7L3.5 4Z" fill="#555"/></svg></div>
<div class="a rb" style="left:146px;top:103px;width:70px">Γραφείο<br>Κίνησης</div>
<div class="a rb" style="left:210px;top:103px;width:90px">Εξωτερικοί<br>Ασθενείς ΚΑΑ</div>
<div class="a rb" style="left:300px;top:103px;width:72px">Ιατρικός<br>Φάκελος <svg width="7" height="4" style="vertical-align:middle;margin-left:1px"><path d="M0 0H7L3.5 4Z" fill="#555"/></svg></div>
<div class="a rb" style="left:372px;top:103px;width:80px">Οικονομικός<br>Φάκελος</div>
<div class="a rb" style="left:452px;top:103px;width:96px">Νοσηλευτικός<br>Φάκελος</div>
<div class="a rb" style="left:545px;top:103px;width:64px">Εργασίες<br><svg width="7" height="4" style="vertical-align:middle;margin-left:1px"><path d="M0 0H7L3.5 4Z" fill="#555"/></svg></div>
<div class="a rb" style="left:616px;top:103px;width:152px">Χρονοπρογραμματισμός</div>
<div class="a rb" style="left:766px;top:103px;width:150px">Χρονοπρογραμματισμός<br>ΚΑΑ</div>
<div class="a rb" style="left:921px;top:103px;width:57px">Floor<br>Plan</div>
<div class="a rb" style="left:981px;top:103px;width:93px">Lead<br>Management</div>
<div class="a gl" style="left:0px;top:137px;width:146px">Πρόσωπα</div>
<div class="a gl" style="left:147px;top:137px;width:466px">Περιστατικό</div>
<div class="a gl" style="left:614px;top:137px;width:306px">Χρονοπρογραμματισμός</div>
<div class="a gl" style="left:921px;top:137px;width:58px">FloorPlan</div>
<div class="a gl" style="left:980px;top:137px;width:95px">Crm</div>
<!-- bottom buttons -->
<div class="a" style="left:1635px;top:982px;width:137px;height:29px;background:#ececec;border:1px solid #000;box-shadow:inset 0 0 0 1px #6a6a6a"></div>
<svg class="a" style="left:1667px;top:988px" width="16" height="17"><path d="M1.5 1.5H12L14.5 4V15.5H1.5Z" fill="#cfe4fa" stroke="#8dbbe8"/><rect x="4.5" y="1.5" width="6" height="4.5" fill="#fff" stroke="#8dbbe8" stroke-width="0.8"/><rect x="8" y="2.5" width="1.5" height="2.5" fill="#5d9ddc"/><rect x="3.5" y="9" width="9" height="6" fill="#fff" stroke="#8dbbe8" stroke-width="0.8"/><path d="M5 11.5H11M5 13.5H11" stroke="#a9cff4" stroke-width="0.8"/></svg>
<div class="t" style="left:1686px;top:991px;font-size:10.6px;color:#111">Επικύρωση</div>
<div class="a" style="left:1779px;top:983px;width:136px;height:27px;background:#dedede;border:1px solid #bdbdbd"></div>
<svg class="a" style="left:1815px;top:988px" width="15" height="15"><path d="M1.5 1.5L13.5 13.5M13.5 1.5L1.5 13.5" stroke="#a9cff4" stroke-width="2.4"/><path d="M1.5 1.5L13.5 13.5M13.5 1.5L1.5 13.5" stroke="#dcedfd" stroke-width="0.8"/></svg>
<div class="t" style="left:1834px;top:991px;font-size:10.6px;color:#111">Ακύρωση</div>

<!-- annotations -->
<div class="a" style="left:1627px;top:974px;width:149px;height:44px;border:2px solid #e0202a"></div>
<div class="a" style="left:1219px;top:484px;width:202px;height:37px;border:2px solid #e0202a"></div>
<div class="a" style="left:1615px;top:960px;width:21px;height:21px;border-radius:50%;background:#e31e26;box-shadow:1px 1px 2px rgba(0,0,0,0.45)"></div>
<div class="t" style="left:1615px;top:964px;width:21px;text-align:center;font-size:12px;font-weight:bold;color:#fff">2</div>
<div class="a" style="left:1208px;top:470px;width:21px;height:21px;border-radius:50%;background:#e31e26;box-shadow:1px 1px 2px rgba(0,0,0,0.45)"></div>
<div class="t" style="left:1208px;top:474px;width:21px;text-align:center;font-size:12px;font-weight:bold;color:#fff">1</div>

</body></html>
